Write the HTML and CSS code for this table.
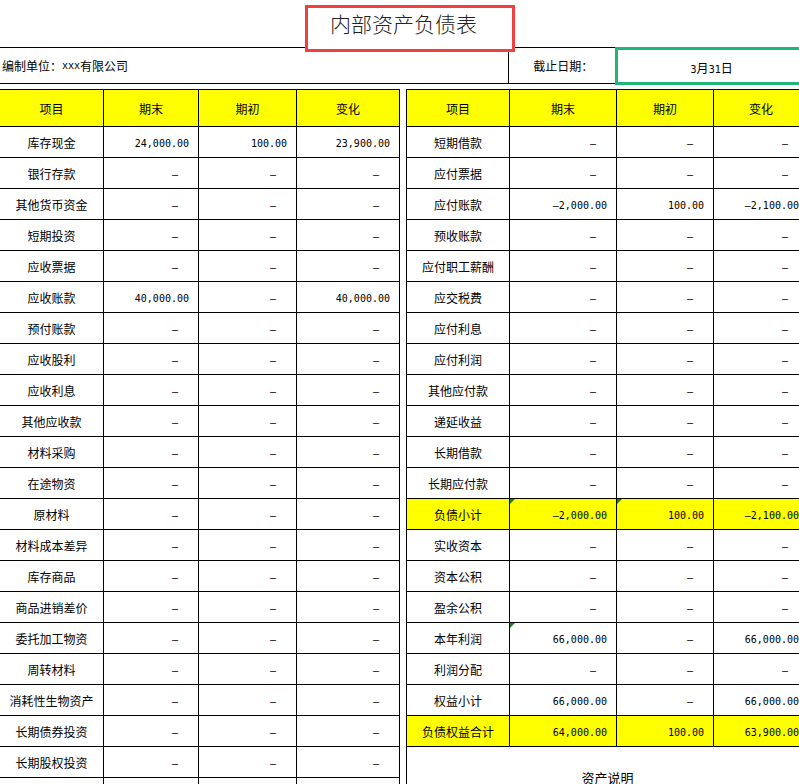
FILE: index.html
```html
<!DOCTYPE html>
<html lang="zh">
<head>
<meta charset="utf-8">
<title>内部资产负债表</title>
<link rel="stylesheet" href="styles.css">
</head>
<body>
<div class="sheet">
  <div class="title-row"></div>
  <div class="title-box">内部资产负债表</div>
  <div class="info-row">
    <div class="company">编制单位：<span class="mono">xxx</span>有限公司</div>
    <div class="date-label">截止日期：</div>
    <div class="date"><span class="mono">3</span>月<span class="mono">31</span>日</div>
  </div>
  <div class="tables">
    <div class="tbl left">
      <div class="c h">项目</div><div class="c h">期末</div><div class="c h">期初</div><div class="c h">变化</div>
      <div class="c">库存现金</div><div class="c n">24,000.00</div><div class="c n">100.00</div><div class="c n">23,900.00</div>
      <div class="c">银行存款</div><div class="c n d">–</div><div class="c n d">–</div><div class="c n d">–</div>
      <div class="c">其他货币资金</div><div class="c n d">–</div><div class="c n d">–</div><div class="c n d">–</div>
      <div class="c">短期投资</div><div class="c n d">–</div><div class="c n d">–</div><div class="c n d">–</div>
      <div class="c">应收票据</div><div class="c n d">–</div><div class="c n d">–</div><div class="c n d">–</div>
      <div class="c">应收账款</div><div class="c n">40,000.00</div><div class="c n d">–</div><div class="c n">40,000.00</div>
      <div class="c">预付账款</div><div class="c n d">–</div><div class="c n d">–</div><div class="c n d">–</div>
      <div class="c">应收股利</div><div class="c n d">–</div><div class="c n d">–</div><div class="c n d">–</div>
      <div class="c">应收利息</div><div class="c n d">–</div><div class="c n d">–</div><div class="c n d">–</div>
      <div class="c">其他应收款</div><div class="c n d">–</div><div class="c n d">–</div><div class="c n d">–</div>
      <div class="c">材料采购</div><div class="c n d">–</div><div class="c n d">–</div><div class="c n d">–</div>
      <div class="c">在途物资</div><div class="c n d">–</div><div class="c n d">–</div><div class="c n d">–</div>
      <div class="c">原材料</div><div class="c n d">–</div><div class="c n d">–</div><div class="c n d">–</div>
      <div class="c">材料成本差异</div><div class="c n d">–</div><div class="c n d">–</div><div class="c n d">–</div>
      <div class="c">库存商品</div><div class="c n d">–</div><div class="c n d">–</div><div class="c n d">–</div>
      <div class="c">商品进销差价</div><div class="c n d">–</div><div class="c n d">–</div><div class="c n d">–</div>
      <div class="c">委托加工物资</div><div class="c n d">–</div><div class="c n d">–</div><div class="c n d">–</div>
      <div class="c">周转材料</div><div class="c n d">–</div><div class="c n d">–</div><div class="c n d">–</div>
      <div class="c">消耗性生物资产</div><div class="c n d">–</div><div class="c n d">–</div><div class="c n d">–</div>
      <div class="c">长期债券投资</div><div class="c n d">–</div><div class="c n d">–</div><div class="c n d">–</div>
      <div class="c">长期股权投资</div><div class="c n d">–</div><div class="c n d">–</div><div class="c n d">–</div>
      <div class="c"></div><div class="c"></div><div class="c"></div><div class="c"></div>
    </div>
    <div class="tbl right">
      <div class="c h">项目</div><div class="c h">期末</div><div class="c h">期初</div><div class="c h">变化</div>
      <div class="c">短期借款</div><div class="c n d">–</div><div class="c n d">–</div><div class="c n d">–</div>
      <div class="c">应付票据</div><div class="c n d">–</div><div class="c n d">–</div><div class="c n d">–</div>
      <div class="c">应付账款</div><div class="c n">–2,000.00</div><div class="c n">100.00</div><div class="c n">–2,100.00</div>
      <div class="c">预收账款</div><div class="c n d">–</div><div class="c n d">–</div><div class="c n d">–</div>
      <div class="c">应付职工薪酬</div><div class="c n d">–</div><div class="c n d">–</div><div class="c n d">–</div>
      <div class="c">应交税费</div><div class="c n d">–</div><div class="c n d">–</div><div class="c n d">–</div>
      <div class="c">应付利息</div><div class="c n d">–</div><div class="c n d">–</div><div class="c n d">–</div>
      <div class="c">应付利润</div><div class="c n d">–</div><div class="c n d">–</div><div class="c n d">–</div>
      <div class="c">其他应付款</div><div class="c n d">–</div><div class="c n d">–</div><div class="c n d">–</div>
      <div class="c">递延收益</div><div class="c n d">–</div><div class="c n d">–</div><div class="c n d">–</div>
      <div class="c">长期借款</div><div class="c n d">–</div><div class="c n d">–</div><div class="c n d">–</div>
      <div class="c">长期应付款</div><div class="c n d">–</div><div class="c n d">–</div><div class="c n d">–</div>
      <div class="c y">负债小计</div><div class="c n y tri">–2,000.00</div><div class="c n y tri">100.00</div><div class="c n y">–2,100.00</div>
      <div class="c">实收资本</div><div class="c n d">–</div><div class="c n d">–</div><div class="c n d">–</div>
      <div class="c">资本公积</div><div class="c n d">–</div><div class="c n d">–</div><div class="c n d">–</div>
      <div class="c">盈余公积</div><div class="c n d">–</div><div class="c n d">–</div><div class="c n d">–</div>
      <div class="c">本年利润</div><div class="c n tri">66,000.00</div><div class="c n d">–</div><div class="c n">66,000.00</div>
      <div class="c">利润分配</div><div class="c n d">–</div><div class="c n d">–</div><div class="c n d">–</div>
      <div class="c">权益小计</div><div class="c n">66,000.00</div><div class="c n d">–</div><div class="c n">66,000.00</div>
      <div class="c y">负债权益合计</div><div class="c n y">64,000.00</div><div class="c n y">100.00</div><div class="c n y">63,900.00</div>
      <div class="c note">资产说明</div>
    </div>
  </div>
</div>
</body>
</html>
```

FILE: styles.css
```css
html, body {
  margin: 0;
  padding: 0;
  overflow: hidden;
  background: #fff;
}

body {
  width: 799px;
  height: 784px;
  font-family: "Noto Sans CJK SC", "Noto Sans", sans-serif;
  font-size: 12px;
  color: #000;
}

.sheet {
  position: relative;
  width: 809px;
}

.title-row {
  height: 47px;
  border-bottom: 1px solid #000;
}

.title-box {
  position: absolute;
  left: 305px;
  top: 5px;
  width: 210px;
  height: 47px;
  box-sizing: border-box;
  border: 3px solid #f23f3f;
  background: #fff;
  padding: 1px 0 0 22px;
  font-size: 21px;
  line-height: 28px;
  font-weight: 300;
  color: #222;
  white-space: nowrap;
}

.info-row {
  display: flex;
  height: 36px;
  box-sizing: border-box;
  border-bottom: 1px solid #000;
}

.mono {
  font-family: "DejaVu Sans Mono", monospace;
  font-size: 10px;
}

.company {
  width: 510px;
  box-sizing: border-box;
  border-right: 1px solid #000;
  display: flex;
  align-items: center;
  padding-left: 2px;
}

.date-label {
  width: 106px;
  display: flex;
  align-items: center;
  justify-content: center;
  padding-left: 1px;
}

.date {
  width: 193px;
  margin-bottom: -1px;
  outline: 3px solid #22b57a;
  outline-offset: -2px;
  display: flex;
  align-items: baseline;
  justify-content: center;
  padding-top: 11px;
  box-sizing: border-box;
  padding-right: 2px;
}

.tables {
  display: flex;
  align-items: flex-start;
  margin-top: 5px;
}

.tbl {
  display: grid;
  border-top: 1px solid #000;
  grid-template-rows: 37px;
  grid-auto-rows: 31px;
}

.tbl.left {
  grid-template-columns: 104px 95px 98px 103px;
}

.tbl.right {
  margin-left: 6px;
  border-left: 1px solid #000;
  grid-template-columns: 103px 107px 97px 95px;
}

.c {
  position: relative;
  box-sizing: border-box;
  border-right: 1px solid #000;
  border-bottom: 1px solid #000;
  display: flex;
  align-items: center;
  justify-content: center;
  padding-top: 1px;
  white-space: nowrap;
}

.h {
  background: #ffff00;
  padding-top: 1px;
}

.y {
  background: #ffff00;
}

.n {
  justify-content: flex-end;
  padding-right: 9px;
  padding-top: 3px;
  font-family: "DejaVu Sans Mono", monospace;
  font-size: 10px;
}

.d {
  padding-right: 20px;
}

.tri::before {
  content: "";
  position: absolute;
  left: 0;
  top: 0;
  width: 0;
  height: 0;
  border-top: 5px solid #1f7f1f;
  border-right: 5px solid transparent;
}

.note {
  grid-column: 1 / -1;
  grid-row: span 2;
  font-size: 13px;
  padding-top: 0;
}
```
